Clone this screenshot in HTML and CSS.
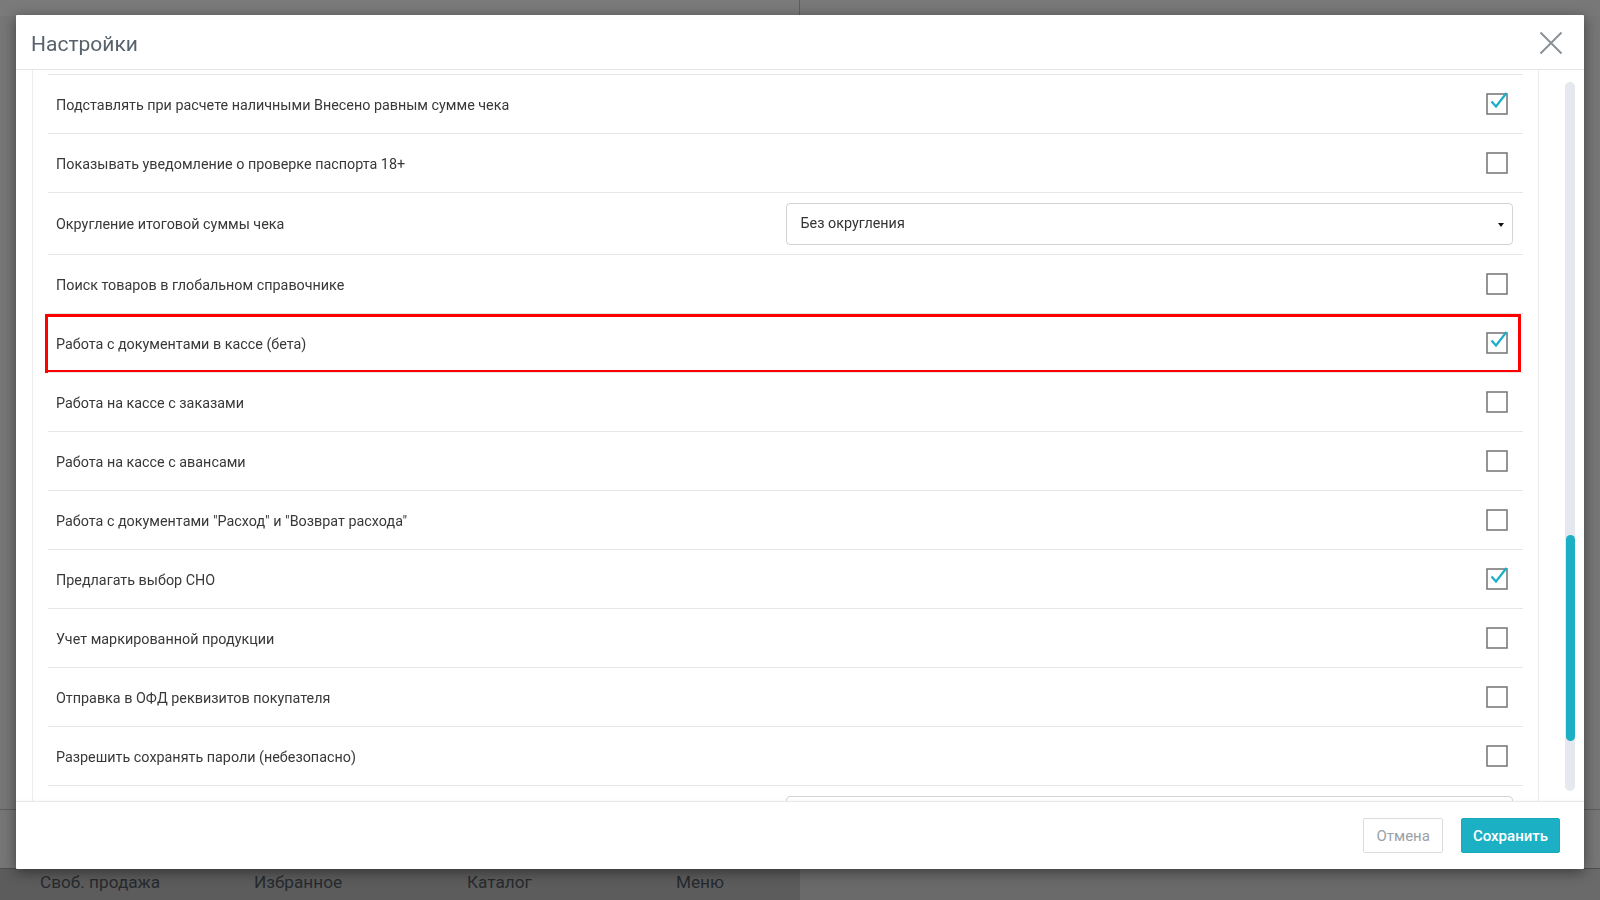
FILE: index.html
```html
<!DOCTYPE html>
<html lang="ru">
<head>
  <meta charset="utf-8">
  <title>Настройки</title>
  <link rel="stylesheet" href="styles.css">
</head>
<body>
  <div class="app">
    <div class="app-top">
      <div class="app-top-left"></div>
      <div class="app-top-right"></div>
    </div>
    <div class="app-main">
      <div class="app-rule"></div>
    </div>
    <div class="app-nav">
      <div class="app-nav-tabs">
        <span>Своб. продажа</span>
        <span>Избранное</span>
        <span>Каталог</span>
        <span>Меню</span>
      </div>
      <div class="app-nav-rest"></div>
    </div>
  </div>

  <div class="modal">
    <div class="modal-header">
      <h4 class="modal-title">Настройки</h4>
      <button class="close" type="button">
        <svg width="24" height="24" viewBox="0 0 24 24">
          <path d="M1.5 1.5 L22.5 22.5 M22.5 1.5 L1.5 22.5" stroke="#8a9197" stroke-width="2" fill="none"/>
        </svg>
      </button>
    </div>

    <div class="modal-body">
      <div class="settings">
        <div class="settings-list">
          <div class="row">
            <div class="label">Подставлять при расчете наличными Внесено равным сумме чека</div>
            <div class="check">
              <svg width="22" height="22" viewBox="0 0 22 22"><rect x="1" y="1" width="20" height="20" class="box"/><polyline points="5.5,8.5 10,13.5 20.5,0" class="tick"/></svg>
            </div>
          </div>
          <div class="row">
            <div class="label">Показывать уведомление о проверке паспорта 18+</div>
            <div class="check">
              <svg width="22" height="22" viewBox="0 0 22 22"><rect x="1" y="1" width="20" height="20" class="box"/></svg>
            </div>
          </div>
          <div class="row row-select">
            <div class="label">Округление итоговой суммы чека</div>
            <div class="select-wrap">
              <div class="select">Без округления</div>
            </div>
          </div>
          <div class="row">
            <div class="label">Поиск товаров в глобальном справочнике</div>
            <div class="check">
              <svg width="22" height="22" viewBox="0 0 22 22"><rect x="1" y="1" width="20" height="20" class="box"/></svg>
            </div>
          </div>
          <div class="row highlighted">
            <div class="label">Работа с документами в кассе (бета)</div>
            <div class="check">
              <svg width="22" height="22" viewBox="0 0 22 22"><rect x="1" y="1" width="20" height="20" class="box"/><polyline points="5.5,8.5 10,13.5 20.5,0" class="tick"/></svg>
            </div>
          </div>
          <div class="row">
            <div class="label">Работа на кассе с заказами</div>
            <div class="check">
              <svg width="22" height="22" viewBox="0 0 22 22"><rect x="1" y="1" width="20" height="20" class="box"/></svg>
            </div>
          </div>
          <div class="row">
            <div class="label">Работа на кассе с авансами</div>
            <div class="check">
              <svg width="22" height="22" viewBox="0 0 22 22"><rect x="1" y="1" width="20" height="20" class="box"/></svg>
            </div>
          </div>
          <div class="row">
            <div class="label">Работа с документами "Расход" и "Возврат расхода"</div>
            <div class="check">
              <svg width="22" height="22" viewBox="0 0 22 22"><rect x="1" y="1" width="20" height="20" class="box"/></svg>
            </div>
          </div>
          <div class="row">
            <div class="label">Предлагать выбор СНО</div>
            <div class="check">
              <svg width="22" height="22" viewBox="0 0 22 22"><rect x="1" y="1" width="20" height="20" class="box"/><polyline points="5.5,8.5 10,13.5 20.5,0" class="tick"/></svg>
            </div>
          </div>
          <div class="row">
            <div class="label">Учет маркированной продукции</div>
            <div class="check">
              <svg width="22" height="22" viewBox="0 0 22 22"><rect x="1" y="1" width="20" height="20" class="box"/></svg>
            </div>
          </div>
          <div class="row">
            <div class="label">Отправка в ОФД реквизитов покупателя</div>
            <div class="check">
              <svg width="22" height="22" viewBox="0 0 22 22"><rect x="1" y="1" width="20" height="20" class="box"/></svg>
            </div>
          </div>
          <div class="row">
            <div class="label">Разрешить сохранять пароли (небезопасно)</div>
            <div class="check">
              <svg width="22" height="22" viewBox="0 0 22 22"><rect x="1" y="1" width="20" height="20" class="box"/></svg>
            </div>
          </div>
          <div class="row row-select">
            <div class="label"></div>
            <div class="select-wrap">
              <div class="select"></div>
            </div>
          </div>
        </div>
      </div>
      <div class="scrollbar">
        <div class="scrollbar-thumb"></div>
      </div>
    </div>

    <div class="modal-footer">
      <button class="btn btn-default" type="button">Отмена</button>
      <button class="btn btn-primary" type="button">Сохранить</button>
    </div>
  </div>
</body>
</html>
```

FILE: styles.css
```css
html, body {
  margin: 0;
  height: 100%;
}

body {
  font-family: Roboto, "Liberation Sans", sans-serif;
  background: #777;
  overflow: hidden;
}

/* page behind the dialog, already dimmed */
.app {
  display: flex;
  flex-direction: column;
  height: 900px;
}

.app-top {
  display: flex;
  height: 16px;
}
.app-top-left {
  width: 799px;
  background: #7a7a7a;
  border-right: 1px solid #5f5f5f;
}
.app-top-right {
  flex: 1;
  background: #787878;
}

.app-main {
  flex: 1;
  background: #767676;
  display: flex;
  flex-direction: column;
  justify-content: flex-end;
}
.app-rule {
  height: 1px;
  margin-bottom: 58px;
  background: #5e5e5e;
}

.app-nav {
  display: flex;
  height: 31px;
  border-top: 1px solid #4e4e4e;
}
.app-nav-tabs {
  width: 800px;
  display: grid;
  grid-template-columns: 214px 213px 209px 160px;
  padding: 3px 0 0 40px;
  box-sizing: border-box;
  background: #5c5c5c;
  font-size: 17.2px;
  line-height: 21px;
  color: #262a2e;
}
.app-nav-rest {
  flex: 1;
  background: #6a6a6a;
}

/* dialog */
.modal {
  position: fixed;
  top: 15px;
  left: 16px;
  width: 1568px;
  height: 854px;
  display: flex;
  flex-direction: column;
  background: #fff;
  border-radius: 1px;
  box-shadow: 0 3px 14px rgba(0,0,0,0.45);
}

.modal-header {
  display: flex;
  align-items: center;
  justify-content: space-between;
  height: 54px;
  padding: 0 21px 0 15px;
  border-bottom: 1px solid #e5e5e5;
}

.modal-title {
  margin: 4px 0 0;
  font-size: 21px;
  font-weight: 400;
  color: #58626c;
}

.close {
  display: block;
  padding: 0;
  margin-top: 2px;
  border: 0;
  background: none;
  cursor: pointer;
}
.close svg { display: block; }

.modal-body {
  flex: 1;
  display: flex;
  min-height: 0;
}

.settings {
  width: 1507px;
  margin-left: 16px;
  padding: 0 15px;
  box-sizing: border-box;
  border-left: 1px solid #ececec;
  border-right: 1px solid #ececec;
  overflow: hidden;
}

.settings-list {
  padding-top: 4px;
}

.row {
  position: relative;
  display: flex;
  align-items: center;
  height: 58px;
  border-top: 1px solid #e6e6e6;
}

.label {
  flex: 1;
  padding: 2px 0 0 8px;
  font-size: 14.35px;
  color: #383838;
}

.check {
  padding-right: 15px;
}
.check svg {
  display: block;
  overflow: visible;
}
.check .box {
  fill: #fff;
  stroke: #7b7b7b;
  stroke-width: 1.6;
}
.check .tick {
  fill: none;
  stroke: #19afc6;
  stroke-width: 2.2;
  stroke-linejoin: miter;
}

.row-select {
  height: 61px;
}
.select-wrap {
  width: 50%;
  padding: 0 10px 0 0;
  box-sizing: border-box;
}
.select {
  position: relative;
  height: 42px;
  padding-left: 14px;
  box-sizing: border-box;
  border: 1px solid #d3d3d3;
  border-radius: 4px;
  font-size: 14.35px;
  line-height: 40px;
  color: #333;
}
.select:after {
  content: '';
  position: absolute;
  top: 19px;
  right: 8px;
  border-left: 3px solid transparent;
  border-right: 3px solid transparent;
  border-top: 4px solid #111;
}

.highlighted:after {
  content: '';
  position: absolute;
  top: 0;
  bottom: -1px;
  left: -3px;
  right: 2px;
  border: 3px solid #f00;
}

.scrollbar {
  position: relative;
  width: 10px;
  margin: 12px 0 10px 26px;
  border-radius: 5px;
  background: #e6e8ef;
}
.scrollbar-thumb {
  position: absolute;
  top: 453px;
  left: 1px;
  width: 9px;
  height: 206px;
  border-radius: 5px;
  background: #1cb0c4;
}

.modal-footer {
  display: flex;
  justify-content: flex-end;
  gap: 18px;
  height: 35px;
  padding: 16px 24px 16px 0;
  border-top: 1px solid #e9e9e9;
  box-shadow: 0 -1px 2px rgba(0,0,0,0.03);
}

.btn {
  height: 35px;
  font-family: Roboto, "Liberation Sans", sans-serif;
  font-size: 15px;
  border-radius: 2px;
  cursor: pointer;
}
.btn-default {
  padding: 0 12px;
  background: #fff;
  color: #9aa1a7;
  border: 1px solid #dcdcdc;
}
.btn-primary {
  padding: 0 11px;
  background: #1cb0c4;
  color: #fff;
  border: 1px solid #1aa9bc;
  font-weight: 500;
}
```
